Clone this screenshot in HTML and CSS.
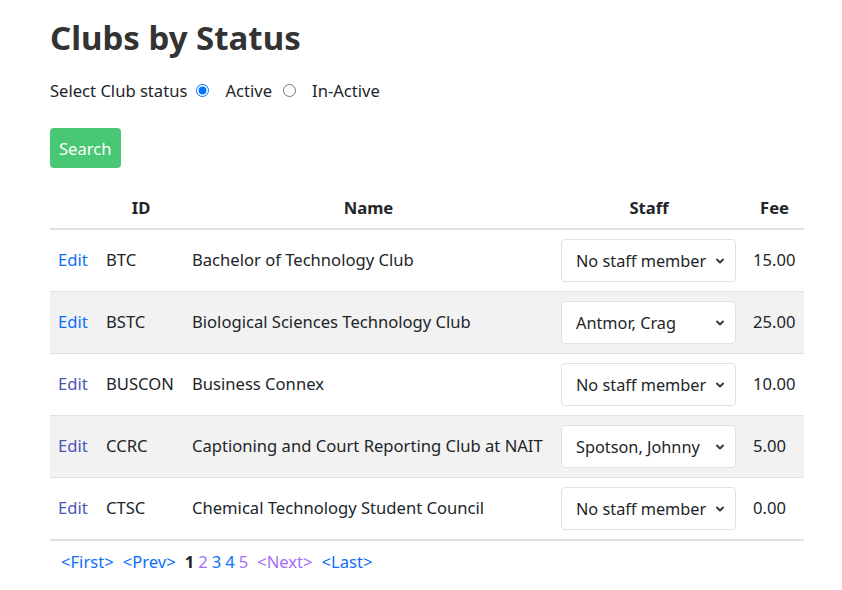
FILE: index.html
```html
<!DOCTYPE html>
<html lang="en">
<head>
<meta charset="utf-8">
<title>Clubs by Status</title>
<link rel="stylesheet" href="styles.css">
</head>
<body>
<main class="container">
  <h1 class="title">Clubs by Status</h1>
  <div class="status-row">
    <span class="status-label">Select Club status</span>
    <label class="radio"><input type="radio" name="status" checked> <span>Active</span></label>
    <label class="radio"><input type="radio" name="status"> <span>In-Active</span></label>
  </div>
  <button class="btn-search" type="button">Search</button>
  <table class="grid">
    <colgroup>
      <col class="c-edit"><col class="c-id"><col class="c-name"><col class="c-staff"><col class="c-fee">
    </colgroup>
    <tr class="head">
      <th></th><th>ID</th><th>Name</th><th>Staff</th><th>Fee</th>
    </tr>
    <tr>
      <td><a class="link" href="#">Edit</a></td><td>BTC</td><td>Bachelor of Technology Club</td>
      <td><select class="staff"><option>No staff member</option></select></td><td>15.00</td>
    </tr>
    <tr class="striped">
      <td><a class="link" href="#">Edit</a></td><td>BSTC</td><td>Biological Sciences Technology Club</td>
      <td><select class="staff"><option>Antmor, Crag</option></select></td><td>25.00</td>
    </tr>
    <tr>
      <td><a class="link visited-edit" href="#">Edit</a></td><td>BUSCON</td><td>Business Connex</td>
      <td><select class="staff"><option>No staff member</option></select></td><td>10.00</td>
    </tr>
    <tr class="striped">
      <td><a class="link visited-edit" href="#">Edit</a></td><td>CCRC</td><td>Captioning and Court Reporting Club at NAIT</td>
      <td><select class="staff"><option>Spotson, Johnny</option></select></td><td>5.00</td>
    </tr>
    <tr class="last">
      <td><a class="link visited-edit" href="#">Edit</a></td><td>CTSC</td><td>Chemical Technology Student Council</td>
      <td><select class="staff"><option>No staff member</option></select></td><td>0.00</td>
    </tr>
    <tr class="pager">
      <td colspan="5">
        <div class="pages">
          <a class="link" href="#">&lt;First&gt;</a>
          <a class="link" href="#">&lt;Prev&gt;</a>
          <span class="current num">1</span>
          <a class="link visited num" href="#">2</a>
          <a class="link num" href="#">3</a>
          <a class="link num" href="#">4</a>
          <a class="link visited num" href="#">5</a>
          <a class="link visited" href="#">&lt;Next&gt;</a>
          <a class="link" href="#">&lt;Last&gt;</a>
        </div>
      </td>
    </tr>
  </table>
</main>
</body>
</html>
```

FILE: styles.css
```css
* { box-sizing: border-box; }
body {
  margin: 0;
  font-family: "Noto Sans", "Open Sans", sans-serif;
  font-size: 16.6px;
  line-height: 1.5;
  color: #212529;
  background: #fff;
}
.container {
  width: 754px;
  margin-left: 50px;
  padding-top: 14px;
}
.title {
  margin: 0 0 14px;
  font-size: 33px;
  line-height: 48px;
  font-weight: 700;
  color: #333;
}
.status-row {
  display: flex;
  align-items: center;
  height: 30px;
  color: #212529;
}
.status-label { margin-right: 9px; }
.radio {
  display: flex;
  align-items: center;
  margin-right: 11px;
}
.radio input {
  margin: 0 16px 0 0;
  width: 13px;
  height: 13px;
}
.btn-search {
  display: block;
  margin-top: 22px;
  height: 40px;
  padding: 0 9px;
  border: 0;
  border-radius: 4px;
  background: #48c774;
  color: #fff;
  font-family: inherit;
  font-size: 16.6px;
}
.grid {
  margin-top: 22px;
  width: 754px;
  border-collapse: collapse;
  table-layout: fixed;
}
.c-edit { width: 48px; }
.c-id { width: 86px; }
.c-name { width: 369px; }
.c-staff { width: 192px; }
.c-fee { width: 59px; }
.grid th {
  padding: 6px 8px 8px;
  font-weight: 700;
  text-align: center;
  line-height: 24px;
  border-bottom: 2px solid #dee2e6;
}
.grid td {
  padding: 9px 8px;
  vertical-align: middle;
  white-space: nowrap;
  border-bottom: 1px solid #dee2e6;
}
.grid tr.last td { border-bottom: 2px solid #dee2e6; }
.grid tr.striped td { background: #f2f2f2; }
.grid tr.pager td {
  border-bottom: 0;
  padding: 9px 11px;
}
.pages {
  display: flex;
  align-items: baseline;
  gap: 9px;
}
.num + .num { margin-left: -5px; }
.staff {
  appearance: none;
  -webkit-appearance: none;
  display: block;
  width: 175px;
  height: 43px;
  padding: 0 22px 0 14px;
  border: 1px solid #dee2e6;
  border-radius: 4px;
  background-color: #fff;
  background-image: url("data:image/svg+xml,%3csvg xmlns='http://www.w3.org/2000/svg' viewBox='0 0 16 16'%3e%3cpath fill='none' stroke='%23343a40' stroke-linecap='round' stroke-linejoin='round' stroke-width='2.6' d='M4 6l4 4 4-4'/%3e%3c/svg%3e");
  background-repeat: no-repeat;
  background-position: right 9px center;
  background-size: 12px 12px;
  color: #212529;
  font-family: inherit;
  font-size: 16.3px;
}
.link { color: #0d6efd; text-decoration: none; }
.link.visited-edit { color: #4a56b4; }
.link.visited { color: #a370f7; }
.current { font-weight: 700; color: #212529; }
```
